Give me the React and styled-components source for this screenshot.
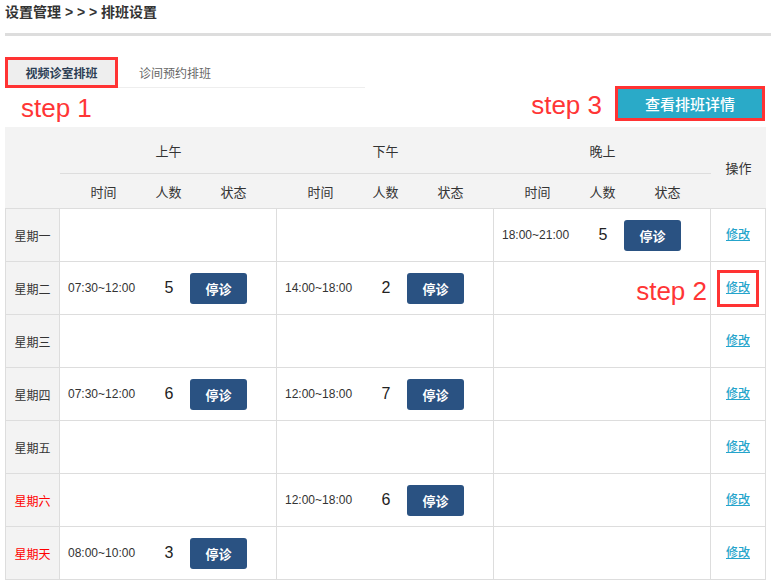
import React from 'react';
import styled, { createGlobalStyle } from 'styled-components';

const GlobalStyle = createGlobalStyle`
  body {
    margin: 0;
    background: #fff;
    color: #333;
    font-family: "Liberation Sans", "Noto Sans CJK SC", sans-serif;
  }
`;

const schedule = [
  { day: '星期一', slots: [null, null, { time: '18:00~21:00', count: 5 }] },
  { day: '星期二', slots: [{ time: '07:30~12:00', count: 5 }, { time: '14:00~18:00', count: 2 }, null], note: 'step 2' },
  { day: '星期三', slots: [null, null, null] },
  { day: '星期四', slots: [{ time: '07:30~12:00', count: 6 }, { time: '12:00~18:00', count: 7 }, null] },
  { day: '星期五', slots: [null, null, null] },
  { day: '星期六', weekend: true, slots: [null, { time: '12:00~18:00', count: 6 }, null] },
  { day: '星期天', weekend: true, slots: [{ time: '08:00~10:00', count: 3 }, null, null] },
];

const periods = ['上午', '下午', '晚上'];

const ScheduleSettings = () => {
  return (
    <Page>
      <GlobalStyle />
      <Breadcrumb>设置管理 &gt; &gt; &gt; 排班设置</Breadcrumb>
      <Divider />
      <TabBar>
        <Tab $active $marked>视频诊室排班</Tab>
        <Tab>诊间预约排班</Tab>
      </TabBar>
      <Toolbar>
        <StepNote $pad="0 0 0 16px">step 1</StepNote>
        <ToolGroup>
          <StepNote $pad="3px 0 0 0">step 3</StepNote>
          <DetailButton>查看排班详情</DetailButton>
        </ToolGroup>
      </Toolbar>

      <Table>
        <Head>
          <HeadCell />
          <HeadMain>
            {periods.map((p) => (
              <Group key={p}>
                <GroupTitle>{p}</GroupTitle>
                <SubHeads>
                  <span>时间</span>
                  <span>人数</span>
                  <span>状态</span>
                </SubHeads>
              </Group>
            ))}
          </HeadMain>
          <HeadCell>操作</HeadCell>
        </Head>

        {schedule.map((row) => (
          <Row key={row.day}>
            <DayCell $weekend={row.weekend}>{row.day}</DayCell>
            {row.slots.map((slot, i) =>
              !slot && row.note && i === 2 ? (
                <NoteCell key={i}>
                  <StepNote $pad="5px 0 0 0">{row.note}</StepNote>
                </NoteCell>
              ) : (
                <SlotCell key={i}>
                  {slot && (
                    <>
                      <Time>{slot.time}</Time>
                      <Count>{slot.count}</Count>
                      <StopButton>停诊</StopButton>
                    </>
                  )}
                </SlotCell>
              )
            )}
            <ActionCell>
              <EditLink href="#" $marked={!!row.note}>修改</EditLink>
            </ActionCell>
          </Row>
        ))}
      </Table>
    </Page>
  );
};

const Page = styled.div`
  padding: 0 5px;
  width: 771px;
  box-sizing: border-box;
`;

const Breadcrumb = styled.div`
  font-size: 14px;
  font-weight: bold;
  line-height: 24px;
  color: #333;
`;

const Divider = styled.div`
  height: 3px;
  margin: 9px -5px 0 0;
  background: #dddddd;
`;

const TabBar = styled.div`
  display: flex;
  align-items: flex-start;
  width: 360px;
  height: 30px;
  margin-top: 21px;
  border-bottom: 1px solid #eeeeee;
`;

const Tab = styled.div`
  box-sizing: border-box;
  height: 31px;
  display: flex;
  align-items: center;
  justify-content: center;
  font-size: 12px;
  padding: ${(p) => (p.$active ? '0' : '0 21px')};
  width: ${(p) => (p.$active ? '113px' : 'auto')};
  font-weight: ${(p) => (p.$active ? 'bold' : 'normal')};
  color: ${(p) => (p.$active ? '#2c3e55' : '#666')};
  background: ${(p) => (p.$active ? '#eeeeee' : 'transparent')};
  border: ${(p) => (p.$marked ? '3px solid #f33' : 'none')};
`;

const Toolbar = styled.div`
  display: flex;
  justify-content: space-between;
  align-items: flex-end;
  height: 35px;
  margin-top: -2px;
`;

const ToolGroup = styled.div`
  display: flex;
  align-items: center;
  gap: 13px;
  height: 35px;
  margin-right: 1px;
`;

const StepNote = styled.span`
  font-family: "Liberation Sans", sans-serif;
  font-size: 26px;
  line-height: 1;
  color: #ff3535;
  padding: ${(p) => p.$pad || '0'};
`;

const DetailButton = styled.button`
  box-sizing: border-box;
  width: 150px;
  height: 35px;
  border: 3px solid #f33;
  background: #2aaac8;
  color: #fff;
  font-family: "Noto Sans CJK SC", sans-serif;
  font-size: 15px;
  font-weight: 500;
  padding: 0;
  cursor: pointer;
`;

const Table = styled.div`
  margin-top: 6px;
  width: 761px;
`;

const Head = styled.div`
  display: grid;
  grid-template-columns: 55px 651px 55px;
  height: 82px;
  box-sizing: border-box;
  background: #f3f3f3;
  border-bottom: 1px solid #ddd;
`;

const HeadCell = styled.div`
  display: flex;
  align-items: center;
  justify-content: center;
  font-size: 13px;
  color: #333;
`;

const HeadMain = styled.div`
  display: grid;
  grid-template-columns: repeat(3, 217px);
`;

const Group = styled.div`
  display: flex;
  flex-direction: column;
`;

const GroupTitle = styled.div`
  height: 46px;
  border-bottom: 1px solid #ddd;
  display: flex;
  align-items: center;
  justify-content: center;
  font-size: 13px;
`;

const SubHeads = styled.div`
  display: grid;
  grid-template-columns: repeat(3, 1fr);
  align-items: center;
  height: 34px;
  padding: 0 11px;
  font-size: 13px;
  text-align: center;
`;

const Row = styled.div`
  display: grid;
  grid-template-columns: 54px 217px 217px 217px 55px;
  height: 53px;
  box-sizing: border-box;
  border-left: 1px solid #ddd;
  border-bottom: 1px solid #ddd;
`;

const Cell = styled.div`
  box-sizing: border-box;
  border-right: 1px solid #ddd;
`;

const DayCell = styled(Cell)`
  display: flex;
  align-items: center;
  justify-content: center;
  background: #f3f3f3;
  font-size: 12px;
  color: ${(p) => (p.$weekend ? '#f00' : '#333')};
`;

const SlotCell = styled(Cell)`
  display: grid;
  grid-template-columns: 80px 42px 57px;
  align-items: center;
  padding-left: 8px;
`;

const NoteCell = styled(Cell)`
  display: flex;
  align-items: center;
  justify-content: flex-end;
  padding-right: 3px;
`;

const Time = styled.span`
  font-size: 12px;
  color: #333;
`;

const Count = styled.span`
  font-size: 16px;
  color: #222;
  text-align: center;
`;

const StopButton = styled.button`
  width: 57px;
  height: 31px;
  border: none;
  border-radius: 3px;
  background: #2a5282;
  color: #fff;
  font-family: "Noto Sans CJK SC", sans-serif;
  font-size: 13px;
  font-weight: bold;
  padding: 0;
  cursor: pointer;
`;

const ActionCell = styled(Cell)`
  display: flex;
  align-items: center;
  justify-content: center;
`;

const EditLink = styled.a`
  font-size: 12px;
  font-weight: 500;
  line-height: 17px;
  color: #25a4cb;
  text-decoration: underline;
  padding: ${(p) => (p.$marked ? '7px 6px' : '0')};
  border: ${(p) => (p.$marked ? '3px solid #f33' : 'none')};
`;

export default ScheduleSettings;
